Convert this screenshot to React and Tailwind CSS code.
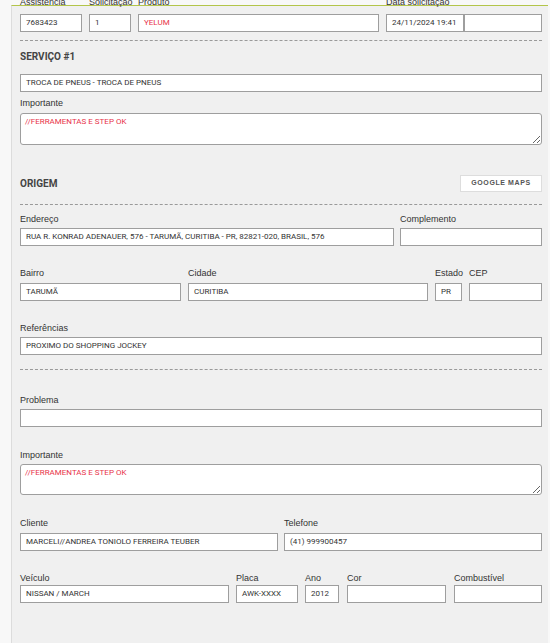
import React from "react";

const L =
  "block h-[12px] leading-[12px] text-[9px] text-[#333] font-['Liberation_Sans',Arial,sans-serif] whitespace-nowrap";
const I =
  "h-[18px] border border-[#9e9e9e] bg-white pl-[5px] flex items-center text-[8px] text-[#333] font-['Roboto',Arial,sans-serif] whitespace-nowrap overflow-hidden";
const H =
  "text-[10px] font-bold text-[#444] font-['Roboto',Arial,sans-serif] leading-[14px]";
const TA =
  "block w-full h-[32px] rounded-[3px] border border-[#9e9e9e] bg-white pl-[4px] pt-[3px] text-[8px] leading-[10px] text-[#e8334a] font-['Roboto',Arial,sans-serif] outline-none";

function Field({ label, value, cls, mb, red }) {
  return (
    <div className={cls}>
      <span className={L + " " + mb}>{label}</span>
      <div className={I + (red ? " !text-[#e8334a]" : "")}>{value}</div>
    </div>
  );
}

function Dashed({ cls }) {
  return <div className={"border-t border-dashed border-[#9a9a9a] " + cls} />;
}

export default function App() {
  return (
    <div className="min-h-[643px] bg-[#f8f8f8] pl-[11px] pr-[2px] pt-[5px] overflow-hidden">
      <div className="bg-[#f0f0f0] border-l border-l-[#dcdcdc] border-t border-t-[#b3c54a] pl-[8px] pr-[6px] pb-[60px]">
        {/* Row 1 */}
        <div className="flex gap-[7px] -mt-[10px]">
          <Field cls="w-[62px]" mb="mb-[6px]" label="Assistencia" value="7683423" />
          <Field cls="w-[42px]" mb="mb-[6px]" label="Solicitação" value="1" />
          <Field cls="w-[241px]" mb="mb-[6px]" label="Produto" value="YELUM" red />
          <div className="w-[156px]">
            <span className={L + " mb-[6px]"}>Data solicitação</span>
            <div className="flex">
              <div className={I + " w-[78px]"}>24/11/2024 19:41</div>
              <div className={I + " w-[78px]"}></div>
            </div>
          </div>
        </div>

        <Dashed cls="mt-[8px]" />

        <div className={H + " mt-[9px]"}>SERVIÇO #1</div>
        <div className={I + " mt-[10px]"}>TROCA DE PNEUS - TROCA DE PNEUS</div>

        <span className={L + " mt-[5px] mb-[4px]"}>Importante</span>
        <textarea readOnly className={TA} defaultValue="//FERRAMENTAS E STEP OK" />

        <div className="mt-[30px] h-[17px] flex items-center justify-between">
          <div className={H}>ORIGEM</div>
          <div className="w-[82px] h-[17px] bg-white border border-[#dddddd] flex items-center justify-center text-[7px] font-bold tracking-[0.6px] text-[#555] font-['Liberation_Sans',Arial,sans-serif]">
            GOOGLE MAPS
          </div>
        </div>

        <Dashed cls="mt-[12px]" />

        <div className="flex gap-[6px] mt-[8px]">
          <Field
            cls="w-[374px]"
            mb="mb-[3px]"
            label="Endereço"
            value="RUA R. KONRAD ADENAUER, 576 - TARUMÃ, CURITIBA - PR, 82821-020, BRASIL, 576"
          />
          <Field cls="w-[142px]" mb="mb-[3px]" label="Complemento" value="" />
        </div>

        <div className="flex gap-[7px] mt-[21px]">
          <Field cls="w-[161px]" mb="mb-[4px]" label="Bairro" value="TARUMÃ" />
          <Field cls="w-[240px]" mb="mb-[4px]" label="Cidade" value="CURITIBA" />
          <Field cls="w-[27px]" mb="mb-[4px]" label="Estado" value="PR" />
          <Field cls="w-[73px]" mb="mb-[4px]" label="CEP" value="" />
        </div>

        <Field cls="mt-[21px]" mb="mb-[3px]" label="Referências" value="PROXIMO DO SHOPPING JOCKEY" />

        <Dashed cls="mt-[14px]" />

        <Field cls="mt-[24px]" mb="mb-[3px]" label="Problema" value="" />

        <span className={L + " mt-[22px] mb-[3px]"}>Importante</span>
        <textarea readOnly className={TA + " !h-[31px]"} defaultValue="//FERRAMENTAS E STEP OK" />

        <div className="flex gap-[6px] mt-[22px]">
          <Field cls="w-[258px]" mb="mb-[4px]" label="Cliente" value="MARCELI//ANDREA TONIOLO FERREIRA TEUBER" />
          <Field cls="w-[258px]" mb="mb-[4px]" label="Telefone" value="(41) 999900457" />
        </div>

        <div className="flex mt-[21px]">
          <Field cls="w-[209px]" mb="mb-[1px]" label="Veículo" value="NISSAN / MARCH" />
          <Field cls="w-[62px] ml-[7px]" mb="mb-[1px]" label="Placa" value="AWK-XXXX" />
          <Field cls="w-[34px] ml-[7px]" mb="mb-[1px]" label="Ano" value="2012" />
          <Field cls="w-[99px] ml-[8px]" mb="mb-[1px]" label="Cor" value="" />
          <Field cls="w-[88px] ml-[8px]" mb="mb-[1px]" label="Combustível" value="" />
        </div>
      </div>
    </div>
  );
}
